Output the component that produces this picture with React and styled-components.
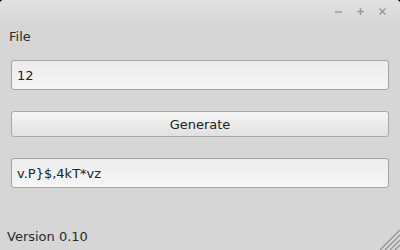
import React from 'react';
import styled, { createGlobalStyle } from 'styled-components';

const GlobalStyle = createGlobalStyle`
    html, body {
        margin: 0;
        padding: 0;
        background: #000000;
    }
    * {
        box-sizing: border-box;
    }
`;

const Window = styled.div`
    width: 400px;
    height: 250px;
    background: #d6d6d6;
    border-radius: 4px 4px 0 0;
    display: flex;
    flex-direction: column;
    font-family: "DejaVu Sans", "Liberation Sans", sans-serif;
    font-size: 13px;
    color: #2a2a2a;
    position: relative;
    overflow: hidden;
`;

const TitleBar = styled.div`
    height: 25px;
    flex: 0 0 25px;
    background: linear-gradient(#e2e2e2, #d6d6d6);
    display: flex;
    align-items: center;
    justify-content: flex-end;
    gap: 9px;
    padding: 0 11px 2px 0;
`;

const TitleButton = styled.span`
    width: 13px;
    height: 13px;
    display: flex;
    align-items: center;
    justify-content: center;
`;

const MenuBar = styled.div`
    height: 23px;
    display: flex;
    align-items: center;
    padding: 0 9px;
`;

const Content = styled.div`
    flex: 1;
    display: flex;
    flex-direction: column;
    padding: 12px 11px 0 11px;
`;

const Field = styled.div`
    height: 30px;
    border: 1px solid #a3a3a3;
    border-radius: 3px;
    background: linear-gradient(#ececec, #f6f6f6);
    display: flex;
    align-items: center;
    padding: 0 5px;
    margin-bottom: ${p => p.$gap}px;
    color: #222;
`;

const Button = styled.div`
    height: 26px;
    border: 1px solid #a8a8a8;
    border-radius: 3px;
    background: linear-gradient(#f5f5f5, #e1e1e1);
    display: flex;
    align-items: center;
    justify-content: center;
    margin-bottom: 21px;
    color: #222;
`;

const Footer = styled.div`
    margin-top: auto;
    height: 25px;
    display: flex;
    align-items: center;
    padding: 0 7px 3px;
`;

const Grip = styled.svg`
    position: absolute;
    right: 0;
    bottom: 0;
`;

function Icon({ kind }) {
    const stroke = '#9c9c9c';
    return (
        <TitleButton>
            <svg width="9" height="9" viewBox="0 0 9 9">
                {kind === 'min' && <line x1="1" y1="5" x2="8" y2="5" stroke={stroke} strokeWidth="1.6" />}
                {kind === 'max' && (
                    <>
                        <line x1="1" y1="4.5" x2="8" y2="4.5" stroke={stroke} strokeWidth="1.6" />
                        <line x1="4.5" y1="1" x2="4.5" y2="8" stroke={stroke} strokeWidth="1.6" />
                    </>
                )}
                {kind === 'close' && (
                    <>
                        <line x1="1.5" y1="1.5" x2="7.5" y2="7.5" stroke={stroke} strokeWidth="1.6" />
                        <line x1="7.5" y1="1.5" x2="1.5" y2="7.5" stroke={stroke} strokeWidth="1.6" />
                    </>
                )}
            </svg>
        </TitleButton>
    );
}

export default function App() {
    return (
        <>
            <GlobalStyle />
            <Window>
                <TitleBar>
                    <Icon kind="min" />
                    <Icon kind="max" />
                    <Icon kind="close" />
                </TitleBar>
                <MenuBar>File</MenuBar>
                <Content>
                    <Field $gap={21}>12</Field>
                    <Button>Generate</Button>
                    <Field $gap={0}>v.P}$,4kT*vz</Field>
                </Content>
                <Footer>Version 0.10</Footer>
                <Grip width="22" height="22" viewBox="0 0 22 22">
                    <line x1="22" y1="2" x2="2" y2="22" stroke="#8f8f8f" strokeWidth="1.2" />
                    <line x1="22" y1="7" x2="7" y2="22" stroke="#8f8f8f" strokeWidth="1.2" />
                    <line x1="22" y1="12" x2="12" y2="22" stroke="#8f8f8f" strokeWidth="1.2" />
                    <line x1="22" y1="17" x2="17" y2="22" stroke="#8f8f8f" strokeWidth="1.2" />
                </Grip>
            </Window>
        </>
    );
}
